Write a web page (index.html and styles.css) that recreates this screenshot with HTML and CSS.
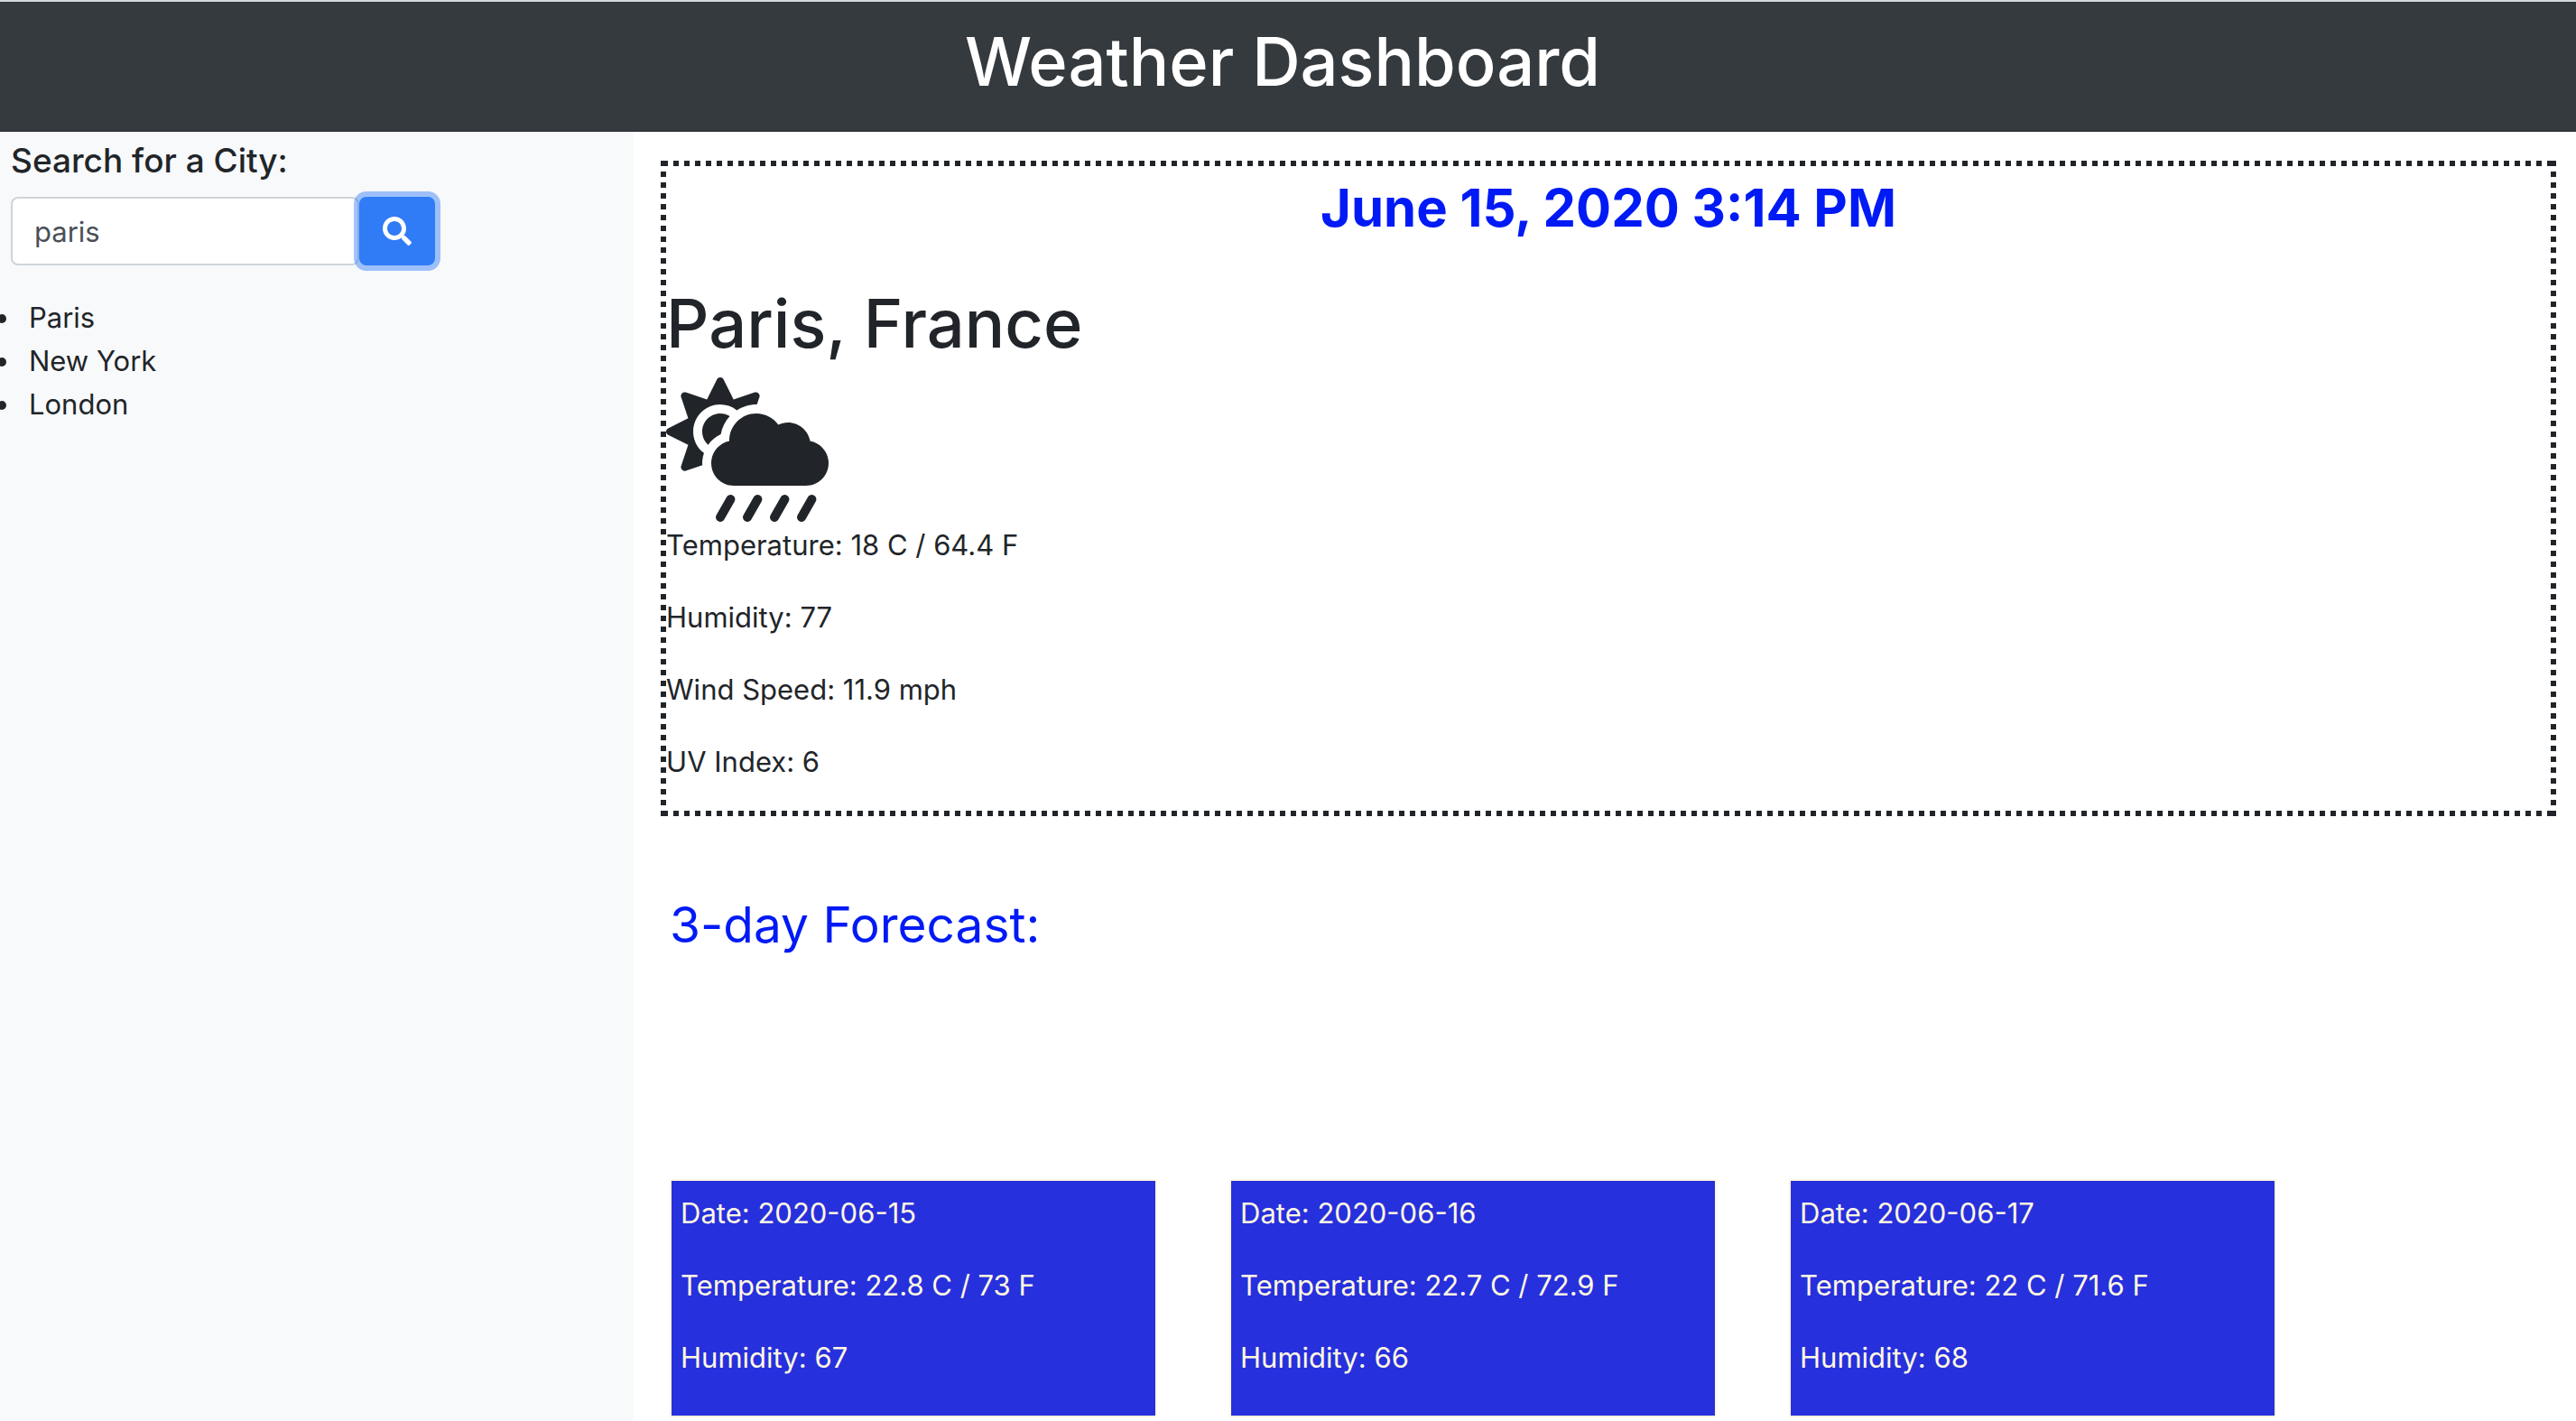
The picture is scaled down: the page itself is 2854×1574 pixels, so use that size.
FILE: index.html
```html
<!DOCTYPE html>
<html lang="en">
<head>
<meta charset="utf-8">
<title>Weather Dashboard</title>
<link rel="stylesheet" href="styles.css">
</head>
<body>
<header class="navbar"><h1 class="navbar-title">Weather Dashboard</h1></header>
<div class="layout">
  <aside class="sidebar">
    <form class="search">
      <label class="search-label" for="city">Search for a City:</label>
      <div class="search-row">
        <input class="search-input" id="city" type="text" value="paris">
        <button class="search-button" type="button" aria-label="Search">
          <svg class="search-icon" viewBox="0 0 512 512" aria-hidden="true"><path fill="currentColor" d="M505 442.7L405.3 343c-4.5-4.5-10.6-7-17-7H372c27.6-35.3 44-79.7 44-128C416 93.1 322.9 0 208 0S0 93.1 0 208s93.1 208 208 208c48.3 0 92.7-16.4 128-44v16.3c0 6.4 2.5 12.5 7 17l99.7 99.7c9.4 9.4 24.6 9.4 33.9 0l28.3-28.3c9.4-9.4 9.4-24.6.1-34zM208 336c-70.7 0-128-57.2-128-128 0-70.7 57.2-128 128-128 70.7 0 128 57.2 128 128 0 70.7-57.2 128-128 128z"/></svg>
        </button>
      </div>
    </form>
    <ul class="history">
      <li>Paris</li>
      <li>New York</li>
      <li>London</li>
    </ul>
  </aside>
  <main class="content">
    <section class="current">
      <p class="current-date">June 15, 2020 3:14 PM</p>
      <h2 class="current-city">Paris, France</h2>
      <svg class="current-icon" viewBox="0 0 576 512" aria-hidden="true"><path fill="currentColor" d="M510.500 225.500c-6.900-37.200-39.300-65.500-78.500-65.500-12.300 0-23.900 3-34.300 8-17.400-24.100-45.600-40-77.700-40-53 0-96 43-96 96 0 .5.2 1.100.2 1.600C187.600 233 160 265.200 160 304c0 44.200 35.800 80 80 80h256c44.200 0 80-35.800 80-80 0-39.200-28.200-71.700-65.500-78.500zm-386.400 34.400c-37.400-37.400-37.400-98.300 0-135.800 34.600-34.600 89.100-36.800 126.700-7.400 20-12.900 43.600-20.700 69.200-20.700.7 0 1.300.2 2 .2l8.900-26.700c3.400-10.200-6.300-19.800-16.500-16.400l-75.300 25.100-35.500-71c-4.800-9.600-18.500-9.600-23.300 0l-35.500 71-75.300-25.100c-10.200-3.400-19.800 6.300-16.400 16.500l25.100 75.300-71 35.500c-9.600 4.800-9.600 18.500 0 23.300l71 35.500-25.100 75.300c-3.400 10.200 6.300 19.800 16.500 16.500l59.200-19.700c-.2-2.400-.7-4.700-.7-7.200 0-12.500 2.300-24.500 6.200-35.900-3.600-2.700-7.100-5.200-10.200-8.300zm69.800-58c4.300-24.500 15.800-46.400 31.900-64-9.800-6.200-21.400-9.900-33.800-9.900-35.300 0-64 28.700-64 64 0 18.700 8.200 35.400 21.100 47.100 11.300-15.900 26.600-28.900 44.800-37.200z"/><path fill="none" stroke="currentColor" stroke-width="32" stroke-linecap="round" d="M516.600 432l-36.600 64M420.600 432l-36.600 64M324.600 432l-36.600 64M228.600 432l-36.600 64"/></svg>
      <p class="reading">Temperature: 18 C / 64.4 F</p>
      <p class="reading">Humidity: 77</p>
      <p class="reading">Wind Speed: 11.9 mph</p>
      <p class="reading">UV Index: 6</p>
    </section>
    <section class="forecast">
      <h2 class="forecast-title">3-day Forecast:</h2>
      <div class="cards">
        <article class="card">
          <p class="reading">Date: 2020-06-15</p>
          <p class="reading">Temperature: 22.8 C / 73 F</p>
          <p class="reading">Humidity: 67</p>
        </article>
        <article class="card">
          <p class="reading">Date: 2020-06-16</p>
          <p class="reading">Temperature: 22.7 C / 72.9 F</p>
          <p class="reading">Humidity: 66</p>
        </article>
        <article class="card">
          <p class="reading">Date: 2020-06-17</p>
          <p class="reading">Temperature: 22 C / 71.6 F</p>
          <p class="reading">Humidity: 68</p>
        </article>
      </div>
    </section>
  </main>
</div>
</body>
</html>
```
FILE: styles.css
```css
*, *::before, *::after { box-sizing: border-box; }

body {
  display: flex;
  flex-direction: column;
  min-height: 100vh;
  margin: 0;
  background: #fff;
  color: #212529;
  font-family: Inter, "Liberation Sans", sans-serif;
  font-size: 31px;
  line-height: 48px;
}

h1, h2, p, ul { margin: 0; }

.navbar {
  padding: 18px 12px 28px 0;
  border-top: 2px solid #d3d7df;
  border-bottom: 2px solid #32353b;
  background: #353a3e;
  color: #fff;
  text-align: center;
}

.navbar-title, .current-city {
  font-size: 74px;
  font-weight: 500;
  line-height: 96px;
}

.layout { display: flex; flex: 1; }

.sidebar {
  flex: 0 0 24.6%;
  background: #f8f9fb;
}

.search { padding: 8px 12px 0; }

.search-label {
  display: block;
  margin-bottom: 16px;
  font-size: 37px;
  font-weight: 500;
}

.search-row { display: flex; }

.search-input {
  width: 386px;
  height: 76px;
  padding: 0 24px;
  border: 2px solid #ced4da;
  border-radius: 8px;
  background: #fff;
  color: #495057;
  font: inherit;
}

.search-button {
  display: flex;
  align-items: center;
  justify-content: center;
  width: 84px;
  height: 76px;
  padding: 0;
  border: 0;
  border-radius: 8px;
  background: #307bf6;
  box-shadow: 0 0 0 6px rgba(48, 123, 246, .45);
  color: #fff;
}

.search-icon { width: 32px; height: 32px; }

.history { padding: 34px 0 0 24px; }

.history li { padding-left: 8px; }

.content { flex: 1; padding: 32px 22px 4px 30px; }

/* Square dots, 6px on and 6px off, along all four edges */
.current {
  --dots-x: repeating-linear-gradient(90deg, #212529 0 6px, transparent 6px 12px);
  --dots-y: repeating-linear-gradient(#212529 0 6px, transparent 6px 12px);
  padding: 6px 6px 36px;
  background:
    var(--dots-x) 2px 0 / 100% 6px no-repeat,
    var(--dots-x) 2px 100% / 100% 6px no-repeat,
    var(--dots-y) 0 0 / 6px 100% no-repeat,
    var(--dots-y) 100% 0 / 6px 100% no-repeat;
}

.current-date {
  padding: 10px 0 14px;
  color: #001af5;
  font-size: 58px;
  font-weight: 700;
  line-height: 72px;
  text-align: center;
}

.current-city { margin: 30px 0 12px; }

.current-icon { display: block; width: 180px; height: 160px; margin-bottom: 2px; overflow: visible; }

.reading { margin-bottom: 32px; }

.current .reading:last-child { margin-bottom: 0; }

.forecast { padding: 84px 10px 0; }

.forecast-title {
  margin-bottom: 246px;
  color: #001af5;
  font-size: 55px;
  font-weight: 400;
  line-height: 72px;
}

.cards { display: grid; grid-template-columns: repeat(3, 540px); gap: 80px; }

.card {
  padding: 12px 10px 8px;
  border: 2px solid #fff8e1;
  background: #2730dd;
  color: #fff8e1;
}
```
